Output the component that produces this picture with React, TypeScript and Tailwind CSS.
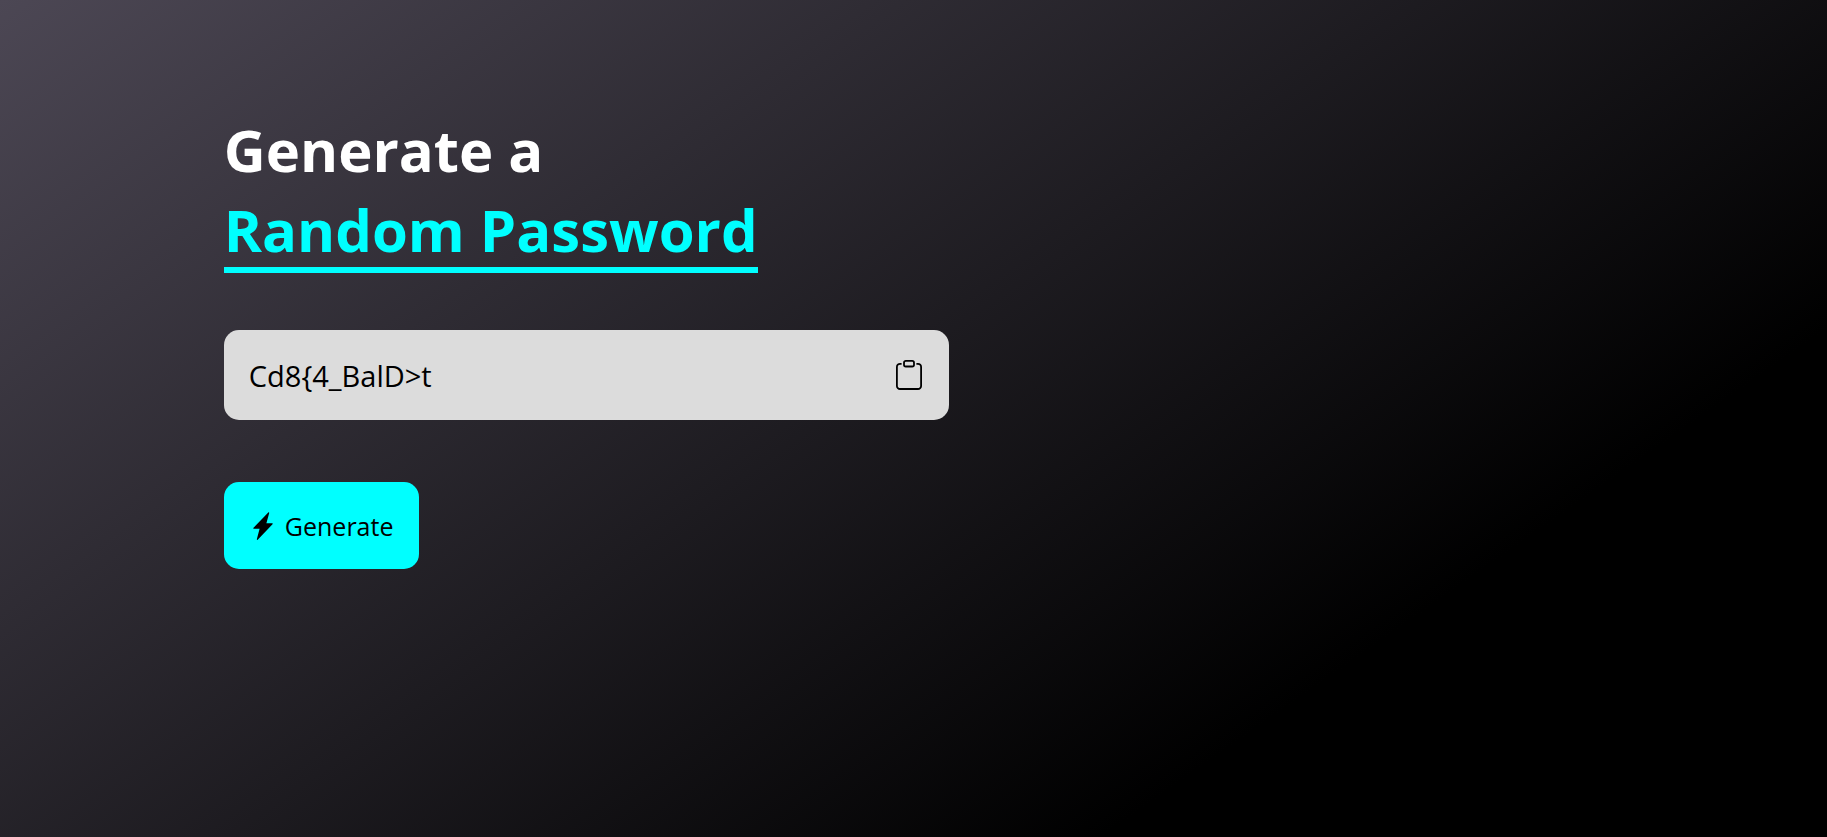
import { useState } from "react";

const CHARS =
  "ABCDEFGHIJKLMNOPQRSTUVWXYZabcdefghijklmnopqrstuvwxyz0123456789!@#$%^&*()_+~|}{[]<>/-=";

function makePassword(length: number) {
  return Array.from({ length }, () => CHARS[Math.floor(Math.random() * CHARS.length)]).join("");
}

function ClipboardIcon() {
  return (
    <svg viewBox="0 0 26 30" className="h-[30px] w-[26px]" fill="none" stroke="currentColor" aria-hidden="true">
      <path
        d="M5.6 3.8H4A3.1 3.1 0 0 0 .9 6.9v19A3.1 3.1 0 0 0 4 29h18a3.1 3.1 0 0 0 3.1-3.1v-19A3.1 3.1 0 0 0 22 3.8h-1.6"
        strokeWidth="1.8"
      />
      <rect x="8" y="0.9" width="10" height="5.6" rx="1.8" strokeWidth="1.8" />
    </svg>
  );
}

function BoltIcon() {
  return (
    <svg viewBox="0 0 20 28" className="h-7 w-5 shrink-0" fill="currentColor" aria-hidden="true">
      <path d="M15.5 0.3Q16.3 0 16.2 0.9L13.4 11.2H19.2Q20.2 11.4 19.5 12.3L4.7 27.7Q3.7 28.3 3.9 27.1L6.6 16.8H0.8Q-0.2 16.6 0.5 15.7Z" />
    </svg>
  );
}

export default function App() {
  const [password, setPassword] = useState("Cd8{4_BalD>t");

  return (
    <main className="min-h-screen bg-[linear-gradient(145deg,#4c4754_0%,#000000_76%)] px-[12.25%] pt-[110px] font-['Open_Sans',sans-serif]">
      <div className="w-full max-w-[725px]">
        <h1 className="text-[58px] leading-[80px] font-bold text-white">
          Generate a
          <br />
          <span className="inline-block border-b-6 border-[#00ffff] leading-[74px] text-[#00ffff]">
            Random Password
          </span>
        </h1>
        <div className="mt-[57px] flex h-[90px] items-center justify-between rounded-[15px] bg-[#dcdcdc] pr-[27px] pl-[25px] text-black">
          <input
            type="text"
            aria-label="Password"
            readOnly
            value={password}
            className="min-w-0 flex-1 bg-transparent pt-0.5 text-[29px] outline-none"
          />
          <button type="button" aria-label="Copy password" onClick={() => navigator.clipboard?.writeText(password)}>
            <ClipboardIcon />
          </button>
        </div>
        <button
          type="button"
          onClick={() => setPassword(makePassword(12))}
          className="mt-[62px] flex h-[87px] items-center gap-3 rounded-[15px] bg-[#00ffff] pr-[26px] pl-[29px] text-[25px] text-black"
        >
          <BoltIcon />
          <span className="pt-0.5">Generate</span>
        </button>
      </div>
    </main>
  );
}
